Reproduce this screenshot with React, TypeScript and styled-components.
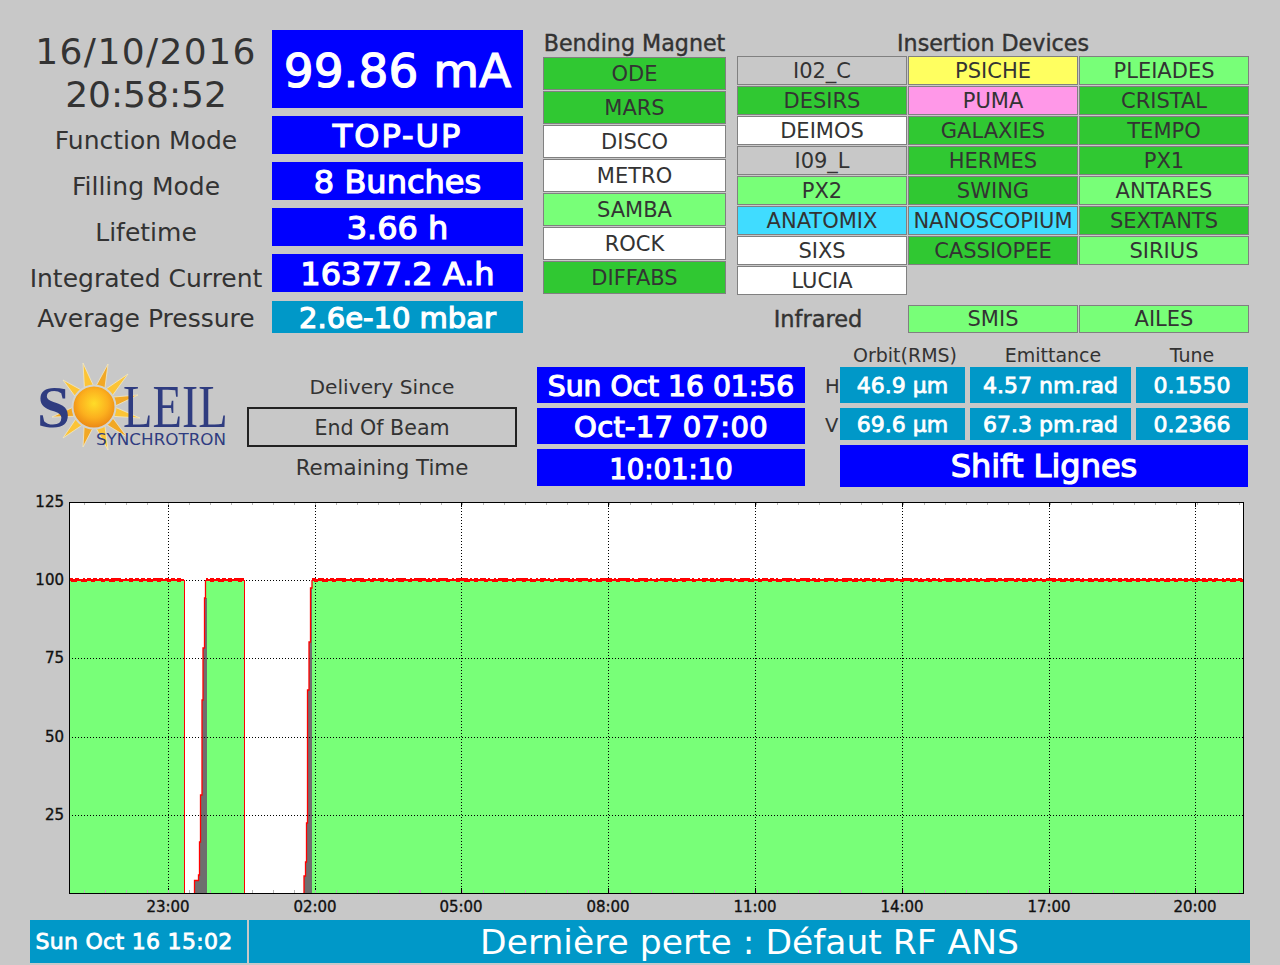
import React from "react";
import styled, { createGlobalStyle } from "styled-components";

const Global = createGlobalStyle`
  html, body { margin: 0; padding: 0; background: #c8c8c8; }
  body { font-family: "DejaVu Sans", sans-serif; color: #333; width: 1280px; height: 965px; overflow: hidden; }
`;

const Page = styled.div`
  width: 1280px;
  height: 965px;
  box-sizing: border-box;
  padding: 30px 30px 0;
  display: flex;
  flex-direction: column;
`;

const TopRow = styled.div`
  display: flex;
  height: 303px;
`;

const StatusColumn = styled.div`
  width: 232px;
  margin-right: 10px;
  display: flex;
  flex-direction: column;
  align-items: center;
`;

const DateLine = styled.div<{ $spacing: number }>`
  font-size: 36px;
  line-height: 43px;
  height: 43px;
  text-align: center;
  letter-spacing: ${(p) => p.$spacing}px;
  white-space: nowrap;
`;

const StatusLabel = styled.div<{ $h: number }>`
  font-size: 25px;
  line-height: ${(p) => p.$h + 4}px;
  height: ${(p) => p.$h}px;
  white-space: nowrap;
`;

const ValueColumn = styled.div`
  width: 251px;
  margin-right: 20px;
  display: flex;
  flex-direction: column;
  align-items: stretch;
`;

const ValueBox = styled.div<{ $h: number; $size: number; $gap: number; $alt?: boolean; $spacing?: number }>`
  height: ${(p) => p.$h}px;
  margin-bottom: ${(p) => p.$gap}px;
  background: ${(p) => (p.$alt ? "#0098c8" : "#0000ff")};
  color: #fff;
  -webkit-text-stroke: 1.2px #fff;
  font-size: ${(p) => p.$size}px;
  letter-spacing: ${(p) => p.$spacing ?? 0}px;
  line-height: ${(p) => p.$h + 3}px;
  text-align: center;
  white-space: nowrap;
`;

const BendingColumn = styled.div`
  width: 183px;
  margin-right: 11px;
  display: flex;
  flex-direction: column;
  gap: 1px;
`;

const SectionTitle = styled.div`
  font-size: 22.2px;
  line-height: 27px;
  height: 26px;
  text-align: center;
  white-space: nowrap;
  -webkit-text-stroke: 0.4px #333;
`;

const Beamline = styled.div<{ $state: string; $h: number }>`
  box-sizing: border-box;
  height: ${(p) => p.$h}px;
  border: 1px solid #808080;
  line-height: ${(p) => p.$h - 1}px;
  font-size: 21px;
  text-align: center;
  white-space: nowrap;
  overflow: hidden;
  background: ${(p) =>
    ({ on: "#30c832", soft: "#78ff78", off: "#ffffff", none: "#c8c8c8", yellow: "#ffff60", pink: "#ff98e8", cyan: "#40dcff" } as Record<string, string>)[p.$state]};
`;

const InsertionColumn = styled.div`
  width: 512px;
  display: flex;
  flex-direction: column;
`;

const InsertionGrid = styled.div`
  display: grid;
  grid-template-columns: 170px 170px 170px;
  grid-auto-rows: 29px;
  gap: 1px;
`;

const InfraredRow = styled.div`
  margin-top: 10px;
  display: grid;
  grid-template-columns: 170px 170px 170px;
  gap: 1px;
  align-items: center;
`;

const InfraredLabel = styled.div`
  font-size: 22.5px;
  text-align: center;
  padding-right: 8px;
  line-height: 28px;
  -webkit-text-stroke: 0.4px #333;
`;

const MiddleRow = styled.div`
  display: flex;
  height: 157px;
  padding-top: 34px;
  box-sizing: border-box;
`;

const LogoSlot = styled.div`
  width: 217px;
  margin-top: -5px;
  display: flex;
  flex-direction: column;
`;

const DeliveryColumn = styled.div`
  width: 270px;
  margin-right: 20px;
  display: flex;
  flex-direction: column;
  align-items: stretch;
  text-align: center;
`;

const DeliveryLabel = styled.div<{ $size: number }>`
  font-size: ${(p) => p.$size}px;
  line-height: 41px;
  height: 40px;
`;

const EndOfBeam = styled.div`
  box-sizing: border-box;
  height: 40px;
  border: 2px solid #222;
  font-size: 20.6px;
  line-height: 38px;
`;

const TimeColumn = styled.div`
  width: 268px;
  margin-right: 35px;
  display: flex;
  flex-direction: column;
`;

const MachineColumn = styled.div`
  width: 408px;
  margin-top: -24px;
  display: flex;
  flex-direction: column;
`;

const MachineHead = styled.div`
  display: grid;
  grid-template-columns: 130px 166px 112px;
  height: 24px;
`;

const HeadCell = styled.div`
  font-size: 19px;
  line-height: 24px;
  text-align: center;
  white-space: nowrap;
`;

const MachineGrid = styled.div`
  display: grid;
  grid-template-columns: 125px 161px 112px;
  column-gap: 5px;
  position: relative;
`;

const Measure = styled.div<{ $h: number }>`
  height: ${(p) => p.$h}px;
  line-height: ${(p) => p.$h + 1}px;
  margin-bottom: 5px;
  background: #0098c8;
  color: #fff;
  -webkit-text-stroke: 0.8px #fff;
  font-size: 22px;
  text-align: center;
  white-space: nowrap;
`;

const PlaneLabel = styled.span<{ $top: number }>`
  position: absolute;
  left: -15px;
  top: ${(p) => p.$top}px;
  font-size: 19.5px;
  line-height: 24px;
`;

const ShiftBox = styled.div`
  height: 42px;
  line-height: 42px;
  background: #0000ff;
  color: #fff;
  -webkit-text-stroke: 1.2px #fff;
  font-size: 32px;
  text-align: center;
`;

const ChartFrame = styled.div`
  height: 430px;
  margin: 0 -30px;
`;

const ChartSvg = styled.svg`
  display: block;
`;

const Footer = styled.div`
  display: flex;
  gap: 2px;
  height: 43px;
`;

const FooterCell = styled.div<{ $w: number; $size: number }>`
  width: ${(p) => p.$w}px;
  background: #0098c8;
  color: #fff;
  font-size: ${(p) => p.$size}px;
  line-height: 45px;
  text-align: center;
  white-space: nowrap;
`;

const FooterDate = styled(FooterCell)`
  -webkit-text-stroke: 0.8px #fff;
  letter-spacing: 0.3px;
  line-height: 43px;
  padding-right: 9px;
  box-sizing: border-box;
`;

const bending: [string, string][] = [
  ["ODE", "on"], ["MARS", "on"], ["DISCO", "off"], ["METRO", "off"], ["SAMBA", "soft"], ["ROCK", "off"], ["DIFFABS", "on"],
];

const insertion: [string, string][] = [
  ["I02_C", "none"], ["PSICHE", "yellow"], ["PLEIADES", "soft"],
  ["DESIRS", "on"], ["PUMA", "pink"], ["CRISTAL", "on"],
  ["DEIMOS", "off"], ["GALAXIES", "on"], ["TEMPO", "on"],
  ["I09_L", "none"], ["HERMES", "on"], ["PX1", "on"],
  ["PX2", "soft"], ["SWING", "on"], ["ANTARES", "soft"],
  ["ANATOMIX", "cyan"], ["NANOSCOPIUM", "cyan"], ["SEXTANTS", "on"],
  ["SIXS", "off"], ["CASSIOPEE", "on"], ["SIRIUS", "soft"],
  ["LUCIA", "off"],
];

const CX = 64, CY = 45;
const rayTips: [number, number][] = [[53, 1], [78, 2], [98, 12], [108, 33], [110, 56], [97, 75], [78, 88], [53, 85], [33, 76], [22, 55], [33, 18]];
const rays = rayTips.map(([tx, ty]) => {
  const a = Math.atan2(ty - CY, tx - CX);
  const w = 0.27;
  const b = (t: number) => `${(CX + 19 * Math.cos(t)).toFixed(1)},${(CY + 19 * Math.sin(t)).toFixed(1)}`;
  return `${tx},${ty} ${b(a - w)} ${b(a + w)}`;
});

const Logo = () => (
  <svg width="210" height="96" viewBox="0 0 210 96">
    <defs>
      <radialGradient id="sun" cx="0.5" cy="0.42" r="0.6">
        <stop offset="0" stopColor="#ffdc28" />
        <stop offset="0.55" stopColor="#fcb01e" />
        <stop offset="1" stopColor="#e98212" />
      </radialGradient>
    </defs>
    {rays.map((pts, i) => (
      <polygon key={i} points={pts} fill={i % 2 ? "#f2a825" : "#fcc436"} stroke="#f3e9c4" strokeWidth="0.8" />
    ))}
    <text x="7" y="65" fontFamily="Liberation Serif, serif" fontSize="60" fontWeight="bold" fill="#2f3c80">S</text>
    <circle cx={CX} cy={CY} r="21.5" fill="url(#sun)" stroke="#d4d4cc" strokeWidth="2" />
    <text transform="translate(93 65) scale(0.78 1)" fontFamily="Liberation Serif, serif" fontSize="62" fill="#2f3c80">LEIL</text>
    <text x="66" y="83" fontFamily="DejaVu Sans, sans-serif" fontSize="16" textLength="130" lengthAdjust="spacingAndGlyphs" fill="#2f3c80">SYNCHROTRON</text>
  </svg>
);

const X0 = 69, X1 = 1243, Y0 = 893, Y1 = 502;
const yTicks = [25, 50, 75, 100];
const yPos: Record<number, number> = { 125: 502, 100: 580, 75: 658, 50: 737, 25: 815 };
const xTicks: [number, string][] = [[168, "23:00"], [315, "02:00"], [461, "05:00"], [608, "08:00"], [755, "11:00"], [902, "14:00"], [1049, "17:00"], [1195, "20:00"]];
const minor: number[] = [];
for (let x = 168 - 147; x < X1; x += 21) if (x > X0) minor.push(x);

const greenPath = `M69 ${Y0} V580 H184 V${Y0} Z M206 ${Y0} V580 H244 V${Y0} Z M312 ${Y0} V580 H${X1} V${Y0} Z`;
const grayPath = `M195 ${Y0} V880 H198.5 V875 H199.5 V842 H200.5 V795 H202 V700 H203 V648 H204.5 V598 H207 V${Y0} Z M304 ${Y0} V876 H305.5 V862 H306.5 V823 H307.5 V690 H309 V642 H310.5 V588 H312 V${Y0} Z`;
const redEdges = `M184.5 580 V893 M244.5 580 V893`;
const redRise1 = `M194.5 893 V880.5 H198.5 V875 H199.5 V842 H200.5 V795 H202 V700 H203 V648 H204.5 V598 H205.5 V580`;
const redRise2 = `M304 893 V876 H305.5 V862 H306.5 V823 H307.5 V690 H309 V642 H310.5 V588 H312 V580`;

const bands: [number, number][] = [[69, 184], [206, 244], [312, X1]];
let noise = "";
bands.forEach(([a, b]) => {
  noise += `M${a} 579 H${b} V581 H${a} Z `;
  for (let x = a; x < b; x += 2) {
    const s = (x * 2654435761) >>> 0;
    if ((s >>> 7) % 3 !== 0) noise += `M${x} 578 h2 v1 h-2 Z `;
    if ((s >>> 11) % 2 === 0) noise += `M${x} 581 h2 v1 h-2 Z `;
  }
});

const Chart = () => (
  <ChartSvg width="1280" height="430" viewBox="0 490 1280 430">
    <rect x={X0} y={Y1} width={X1 - X0} height={Y0 - Y1} fill="#fff" />
    <path d={greenPath} fill="#78ff78" />
    <path d={grayPath} fill="#6e6e6e" />
    {yTicks.map((v) => (
      <line key={v} x1={X0} x2={X1} y1={yPos[v] + 0.5} y2={yPos[v] + 0.5} stroke="#000" strokeDasharray="1 2" />
    ))}
    {xTicks.map(([x]) => (
      <g key={x} stroke="#000">
        <line x1={x + 0.5} x2={x + 0.5} y1={Y1} y2={Y0} strokeDasharray="1 2" />
        <line x1={x + 0.5} x2={x + 0.5} y1={Y1} y2={Y1 + 5} />
        <line x1={x + 0.5} x2={x + 0.5} y1={Y0 - 5} y2={Y0} />
      </g>
    ))}
    {minor.map((x) => (
      <g key={x} stroke="#b4b4b4">
        <line x1={x + 0.5} x2={x + 0.5} y1={Y1} y2={Y1 + 3} />
        <line x1={x + 0.5} x2={x + 0.5} y1={Y0 - 3} y2={Y0} />
      </g>
    ))}
    <path d={redEdges} fill="none" stroke="#ff0000" strokeWidth="1" />
    <path d={redRise1} fill="none" stroke="#ff0000" strokeWidth="1.3" />
    <path d={redRise2} fill="none" stroke="#ff0000" strokeWidth="1.3" />
    <path d={noise} fill="#ff0000" shapeRendering="crispEdges" />
    <rect x={X0 + 0.5} y={Y1 + 0.5} width={X1 - X0} height={Y0 - Y1} fill="none" stroke="#000" />
    {[125, 100, 75, 50, 25].map((v) => (
      <text key={v} x="64" y={yPos[v] + 5} textAnchor="end" fontFamily="DejaVu Sans, sans-serif" fontSize="15" stroke="#111" strokeWidth="0.35" fill="#111">{v}</text>
    ))}
    {xTicks.map(([x, t]) => (
      <text key={t} x={x} y="912" textAnchor="middle" fontFamily="DejaVu Sans, sans-serif" fontSize="15" stroke="#111" strokeWidth="0.35" fill="#111">{t}</text>
    ))}
  </ChartSvg>
);

export default function App() {
  return (
    <Page>
      <Global />
      <TopRow>
        <StatusColumn>
          <DateLine $spacing={1.4}>16/10/2016</DateLine>
          <DateLine $spacing={0}>20:58:52</DateLine>
          <StatusLabel $h={46}>Function Mode</StatusLabel>
          <StatusLabel $h={46}>Filling Mode</StatusLabel>
          <StatusLabel $h={46}>Lifetime</StatusLabel>
          <StatusLabel $h={46}>Integrated Current</StatusLabel>
          <StatusLabel $h={33}>Average Pressure</StatusLabel>
        </StatusColumn>
        <ValueColumn>
          <ValueBox $h={78} $size={47} $gap={8}>99.86 mA</ValueBox>
          <ValueBox $h={38} $size={32} $gap={8} $spacing={2}>TOP-UP</ValueBox>
          <ValueBox $h={38} $size={32} $gap={8}>8 Bunches</ValueBox>
          <ValueBox $h={38} $size={32} $gap={8}>3.66 h</ValueBox>
          <ValueBox $h={38} $size={32} $gap={9}>16377.2 A.h</ValueBox>
          <ValueBox $h={32} $size={29} $gap={0} $alt>2.6e-10 mbar</ValueBox>
        </ValueColumn>
        <BendingColumn>
          <SectionTitle>Bending Magnet</SectionTitle>
          {bending.map(([n, s]) => (
            <Beamline key={n} $state={s} $h={33}>{n}</Beamline>
          ))}
        </BendingColumn>
        <InsertionColumn>
          <SectionTitle>Insertion Devices</SectionTitle>
          <InsertionGrid>
            {insertion.map(([n, s]) => (
              <Beamline key={n} $state={s} $h={29}>{n}</Beamline>
            ))}
          </InsertionGrid>
          <InfraredRow>
            <InfraredLabel>Infrared</InfraredLabel>
            <Beamline $state="soft" $h={28}>SMIS</Beamline>
            <Beamline $state="soft" $h={28}>AILES</Beamline>
          </InfraredRow>
        </InsertionColumn>
      </TopRow>
      <MiddleRow>
        <LogoSlot><Logo /></LogoSlot>
        <DeliveryColumn>
          <DeliveryLabel $size={20.2}>Delivery Since</DeliveryLabel>
          <EndOfBeam>End Of Beam</EndOfBeam>
          <DeliveryLabel $size={21.4}>Remaining Time</DeliveryLabel>
        </DeliveryColumn>
        <TimeColumn>
          <ValueBox $h={36} $size={28.2} $gap={5}>Sun Oct 16 01:56</ValueBox>
          <ValueBox $h={36} $size={29} $gap={5} $spacing={0.3}>Oct-17 07:00</ValueBox>
          <ValueBox $h={37} $size={27.5} $gap={0}>10:01:10</ValueBox>
        </TimeColumn>
        <MachineColumn>
          <MachineHead>
            <HeadCell>Orbit(RMS)</HeadCell>
            <HeadCell>Emittance</HeadCell>
            <HeadCell>Tune</HeadCell>
          </MachineHead>
          <MachineGrid>
            <PlaneLabel $top={8}>H</PlaneLabel>
            <PlaneLabel $top={47}>V</PlaneLabel>
            <Measure $h={36}>46.9 µm</Measure>
            <Measure $h={36}>4.57 nm.rad</Measure>
            <Measure $h={36}>0.1550</Measure>
            <Measure $h={32}>69.6 µm</Measure>
            <Measure $h={32}>67.3 pm.rad</Measure>
            <Measure $h={32}>0.2366</Measure>
          </MachineGrid>
          <ShiftBox>Shift Lignes</ShiftBox>
        </MachineColumn>
      </MiddleRow>
      <ChartFrame><Chart /></ChartFrame>
      <Footer>
        <FooterDate $w={217} $size={22}>Sun Oct 16 15:02</FooterDate>
        <FooterCell $w={1001} $size={34.5}>Dernière perte : Défaut RF ANS</FooterCell>
      </Footer>
    </Page>
  );
}
